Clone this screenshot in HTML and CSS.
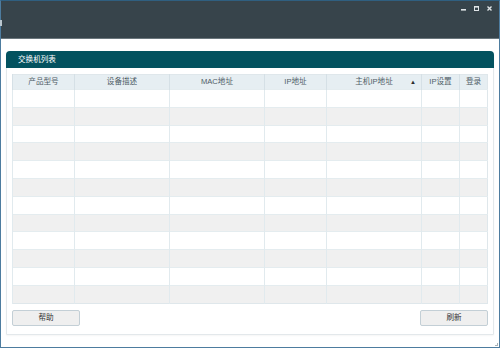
FILE: index.html
```html
<!DOCTYPE html>
<html lang="zh-CN">

<head>
    <meta charset="UTF-8">
    <meta name="viewport" content="width=device-width, initial-scale=1.0">
    <title>交换机列表</title>
    <link rel="stylesheet" href="styles.css">
</head>

<body>
    <div class="window">
        <div class="titlebar">
            <div class="app-icon"></div>
            <div class="controls">
                <svg class="ctl" width="7" height="7" viewBox="0 0 7 7">
                    <rect x="1" y="4" width="5" height="1.6" fill="#dfe4e7" />
                </svg>
                <svg class="ctl" width="7" height="7" viewBox="0 0 7 7">
                    <rect x="1.5" y="1.5" width="4" height="4" fill="none" stroke="#dfe4e7" stroke-width="1" />
                    <rect x="1" y="1" width="5" height="1.6" fill="#dfe4e7" />
                </svg>
                <svg class="ctl" width="7" height="7" viewBox="0 0 7 7">
                    <path d="M1.5 1.5 L5.5 5.5 M5.5 1.5 L1.5 5.5" stroke="#dfe4e7" stroke-width="1.4" />
                </svg>
            </div>
        </div>

        <div class="content">
            <div class="panel">
                <div class="panel-head">交换机列表</div>
                <div class="panel-body">
                    <table class="grid">
                        <colgroup>
                            <col style="width: 62px">
                            <col style="width: 95px">
                            <col style="width: 95px">
                            <col style="width: 62px">
                            <col style="width: 95px">
                            <col style="width: 38px">
                            <col>
                        </colgroup>
                        <thead>
                            <tr>
                                <th>产品型号</th>
                                <th>设备描述</th>
                                <th>MAC地址</th>
                                <th>IP地址</th>
                                <th class="sorted">主机IP地址<span class="sort-arrow">▲</span></th>
                                <th>IP设置</th>
                                <th>登录</th>
                            </tr>
                        </thead>
                        <tbody id="rows"></tbody>
                    </table>

                    <div class="actions">
                        <button class="btn">帮助</button>
                        <button class="btn">刷新</button>
                    </div>
                </div>
            </div>
        </div>
        <div class="grip"></div>
    </div>

    <script>
        // empty rows to fill the list
        const tbody = document.getElementById('rows');
        for (let i = 0; i < 12; i++) {
            const tr = document.createElement('tr');
            for (let j = 0; j < 7; j++) {
                tr.appendChild(document.createElement('td'));
            }
            tbody.appendChild(tr);
        }
    </script>
</body>

</html>
```

FILE: styles.css
```css
* {
    box-sizing: border-box;
}

body {
    margin: 0;
    width: 500px;
    height: 348px;
    font-family: "Liberation Sans", "Noto Sans CJK SC", sans-serif;
    background: #ffffff;
}

.window {
    position: relative;
    width: 500px;
    height: 348px;
    display: flex;
    flex-direction: column;
    border: 1px solid #4d7c9f;
    border-top-color: #2f5f80;
    background: #ffffff;
}

.titlebar {
    height: 38px;
    flex: none;
    display: flex;
    align-items: flex-start;
    background: #37444b;
    border-bottom: 1px solid #6a767c;
}

.app-icon {
    width: 2px;
    height: 6px;
    margin-top: 19px;
    margin-left: -1px;
    background: #b9c6ce;
}

.controls {
    margin-left: auto;
    margin-right: 6px;
    margin-top: 4px;
    display: flex;
    gap: 6px;
}

.ctl {
    display: block;
}

.content {
    flex: 1;
    padding: 12px 5px 12px 5px;
}

.panel {
    height: 100%;
    display: flex;
    flex-direction: column;
    border: 1px solid #e3e8eb;
    border-radius: 4px 4px 0 0;
    box-shadow: 0 1px 2px rgba(0, 0, 0, 0.04);
}

.panel-head {
    height: 17px;
    flex: none;
    margin: -1px -1px 0 -1px;
    padding-left: 12px;
    background: #03525f;
    border-radius: 4px 4px 0 0;
    color: #ffffff;
    font-size: 7.6px;
    line-height: 18px;
}

.panel-body {
    flex: 1;
    padding: 6px 5px 0 5px;
}

.grid {
    width: 476px;
    border-collapse: collapse;
    table-layout: fixed;
    border: 1px solid #dfe7eb;
}

.grid th {
    height: 14px;
    padding: 0;
    background: #e6eef2;
    border-left: 1px solid #d5e0e6;
    color: #4f5d66;
    font-size: 7.6px;
    font-weight: normal;
    text-align: center;
    line-height: 14px;
}

.grid th.sorted {
    position: relative;
}

.sort-arrow {
    position: absolute;
    right: 5px;
    top: 0;
    font-size: 6px;
    color: #2b2b2b;
}

.grid td {
    height: 17.8px;
    padding: 0;
    border-left: 1px solid #e1eaee;
    border-top: 1px solid #e4ecef;
}

.grid tbody tr:nth-child(even) td {
    background: #f0f0f0;
}

.actions {
    display: flex;
    justify-content: space-between;
    margin-top: 6px;
}

.btn {
    width: 68px;
    height: 16px;
    padding: 0;
    background: #efefef;
    border: 1px solid #c3cfd6;
    border-radius: 2px;
    color: #333333;
    font-family: "Liberation Sans", "Noto Sans CJK SC", sans-serif;
    font-size: 7.6px;
    line-height: 14px;
}

.grip {
    position: absolute;
    right: 1px;
    bottom: 1px;
    width: 3px;
    height: 3px;
    border-right: 1px solid #a9b2b7;
    border-bottom: 1px solid #a9b2b7;
}
```
